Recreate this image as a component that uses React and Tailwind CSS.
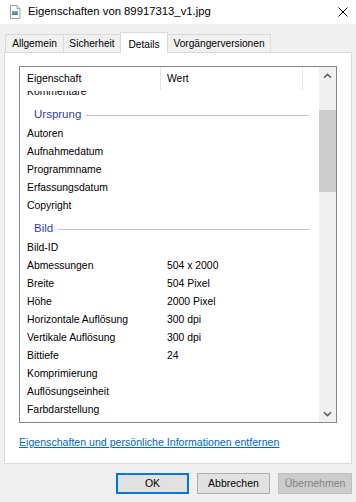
import React from 'react'

const items = [
  { type: 'row', label: 'Kommentare' },
  { type: 'group', label: 'Ursprung' },
  { type: 'row', label: 'Autoren' },
  { type: 'row', label: 'Aufnahmedatum' },
  { type: 'row', label: 'Programmname' },
  { type: 'row', label: 'Erfassungsdatum' },
  { type: 'row', label: 'Copyright' },
  { type: 'group', label: 'Bild' },
  { type: 'row', label: 'Bild-ID' },
  { type: 'row', label: 'Abmessungen', value: '504 x 2000' },
  { type: 'row', label: 'Breite', value: '504 Pixel' },
  { type: 'row', label: 'Höhe', value: '2000 Pixel' },
  { type: 'row', label: 'Horizontale Auflösung', value: '300 dpi' },
  { type: 'row', label: 'Vertikale Auflösung', value: '300 dpi' },
  { type: 'row', label: 'Bittiefe', value: '24' },
  { type: 'row', label: 'Komprimierung' },
  { type: 'row', label: 'Auflösungseinheit' },
  { type: 'row', label: 'Farbdarstellung' },
]

function FileIcon() {
  return (
    <svg width="12" height="14" viewBox="0 0 12 14">
      <path d="M1.5 0.5 H8 L11 3.5 V13.5 H1.5 Z" fill="#ffffff" stroke="#9aa3ad" />
      <path d="M8 0.5 V3.5 H11" fill="#e6e9ed" stroke="#9aa3ad" />
      <rect x="3" y="6" width="6" height="4" fill="#6a9fd0" />
      <rect x="3" y="8.5" width="6" height="1.5" fill="#4f8a4f" />
    </svg>
  )
}

function Chevron({ down }) {
  return (
    <svg width="9" height="6" viewBox="0 0 9 6">
      <path
        d={down ? 'M1 1.2 L4.5 4.6 L8 1.2' : 'M1 4.8 L4.5 1.4 L8 4.8'}
        fill="none"
        stroke="#606060"
        strokeWidth="1.6"
      />
    </svg>
  )
}

export default function App() {
  return (
    <div
      className="w-[356px] h-[502px] bg-[#f0f0f0] overflow-hidden text-black"
      style={{ fontFamily: '"Liberation Sans", Arial, sans-serif' }}
    >
      {/* Title bar */}
      <div className="h-[24px] bg-white flex items-center">
        <div className="ml-[9px] w-[12px] flex">
          <FileIcon />
        </div>
        <span className="ml-[7px] text-[11.3px] leading-none">Eigenschaften von 89917313_v1.jpg</span>
        <svg className="ml-auto mr-[8px]" width="10" height="10" viewBox="0 0 10 10">
          <path d="M0.5 0.5 L9.5 9.5 M9.5 0.5 L0.5 9.5" stroke="#000" strokeWidth="1" />
        </svg>
      </div>

      {/* Tabs */}
      <div className="pt-[8px] pl-[5px] flex items-end text-[10.2px]">
        <div className="w-[59px] h-[18px] border border-b-0 border-[#d9d9d9] flex items-center justify-center">
          Allgemein
        </div>
        <div className="w-[57px] h-[18px] border-t border-r border-[#d9d9d9] flex items-center justify-center">
          Sicherheit
        </div>
        <div className="-ml-px w-[48px] h-[21px] -mb-px relative z-10 bg-white border border-b-0 border-[#d9d9d9] flex items-start pt-[4px] justify-center">
          Details
        </div>
        <div className="w-[103px] h-[18px] border-t border-r border-[#d9d9d9] flex items-center justify-center">
          Vorgängerversionen
        </div>
      </div>

      {/* Panel */}
      <div className="ml-[4px] w-[348px] h-[412px] bg-white border border-[#d9d9d9] pt-[13px] pl-[14px]">
        <div className="w-[318px] h-[357px] border border-[#828790] flex">
          <div className="flex-1 flex flex-col overflow-hidden">
            {/* Header */}
            <div className="h-[24px] shrink-0 flex text-[10.4px] bg-white relative z-10">
              <div className="w-[140px] flex items-center pl-[7px]">Eigenschaft</div>
              <div className="w-px h-[23px] bg-[#e5e5e5]" />
              <div className="w-[141px] flex items-center pl-[6px]">Wert</div>
              <div className="w-px h-[23px] bg-[#e5e5e5]" />
            </div>
            {/* Body */}
            <div className="flex-1 overflow-hidden">
              <div className="-mt-[8px] text-[10.4px]">
                {items.map((it, i) =>
                  it.type === 'group' ? (
                    <div key={i} className="h-[24px] pt-[4px] flex items-center pl-[14px] pr-[10px]">
                      <span className="text-[11.5px] text-[#2d3fa3] leading-none">{it.label}</span>
                      <div className="flex-1 h-px bg-[#b7c0da] ml-[5px]" />
                    </div>
                  ) : (
                    <div key={i} className="h-[18px] flex items-center">
                      <div className="w-[140px] pl-[7px] whitespace-nowrap">{it.label}</div>
                      <div className="pl-[7px] whitespace-nowrap">{it.value || ''}</div>
                    </div>
                  )
                )}
              </div>
            </div>
          </div>
          {/* Scrollbar */}
          <div className="w-[17px] bg-[#f0f0f0] flex flex-col">
            <div className="h-[17px] flex items-center justify-center">
              <Chevron />
            </div>
            <div className="flex-1">
              <div className="mt-[26px] h-[82px] bg-[#cdcdcd]" />
            </div>
            <div className="h-[17px] flex items-center justify-center">
              <Chevron down />
            </div>
          </div>
        </div>
        <div className="mt-[14px] text-[10.6px] text-[#0066cc] underline leading-none">
          Eigenschaften und persönliche Informationen entfernen
        </div>
      </div>

      {/* Buttons */}
      <div className="mt-[9px] pr-[4px] flex justify-end gap-[8px] text-[10.5px]">
        <button className="w-[73px] h-[21px] bg-[#e1e1e1] border-2 border-[#0078d7]">OK</button>
        <button className="w-[73px] h-[21px] bg-[#e1e1e1] border border-[#adadad]">Abbrechen</button>
        <button className="w-[74px] h-[21px] bg-[#cccccc] border border-[#bfbfbf] text-[#838383]">Übernehmen</button>
      </div>
    </div>
  )
}
